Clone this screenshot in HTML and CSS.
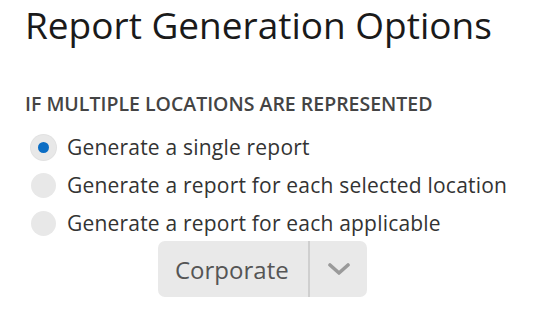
FILE: index.html
```html
<!DOCTYPE html>
<html lang="en">
<head>
    <meta charset="UTF-8">
    <title>Report Generation Options</title>
    <link rel="stylesheet" href="styles.css">
</head>
<body>
    <div class="panel">
        <h1 class="title">Report Generation Options</h1>

        <div class="section-label">If multiple locations are represented</div>

        <div class="options">
            <label class="option">
                <span class="radio checked"></span>
                <span class="option-text">Generate a single report</span>
            </label>
            <label class="option">
                <span class="radio"></span>
                <span class="option-text">Generate a report for each selected location</span>
            </label>
            <label class="option">
                <span class="radio"></span>
                <span class="option-text">Generate a report for each applicable</span>
            </label>
        </div>

        <div class="select-row">
            <div class="select">
                <span class="select-value">Corporate</span>
                <span class="select-toggle">
                    <svg width="22" height="12" viewBox="0 0 22 12">
                        <path d="M2 2 L11 10 L20 2" fill="none" stroke="#9a9a9a" stroke-width="3.6" stroke-linecap="round" stroke-linejoin="round"/>
                    </svg>
                </span>
            </div>
        </div>
    </div>
</body>
</html>
```

FILE: styles.css
```css
body {
    margin: 0;
    background: #fff;
    font-family: 'Open Sans', 'Liberation Sans', sans-serif;
    color: #222;
}

.panel {
    padding: 0 0 0 25px;
}

.title {
    margin: 0;
    font-size: 37px;
    font-weight: 400;
    line-height: 50px;
    color: #1a1a1a;
    white-space: nowrap;
}

.section-label {
    margin-top: 42px;
    font-size: 19.5px;
    font-weight: 600;
    text-transform: uppercase;
    color: #444;
    line-height: 24px;
}

.options {
    margin-top: 19px;
    display: flex;
    flex-direction: column;
    gap: 14px;
}

.option {
    display: flex;
    align-items: center;
    gap: 11px;
    padding-left: 6px;
    height: 24px;
}

.radio {
    width: 25px;
    height: 25px;
    border-radius: 50%;
    background: #e8e8e8;
    display: flex;
    align-items: center;
    justify-content: center;
    flex-shrink: 0;
}

.radio.checked {
    box-shadow: 0 0 0 1px #e2e2e2;
}

.radio.checked::after {
    content: "";
    width: 11px;
    height: 11px;
    border-radius: 50%;
    background: #0b6dc4;
}

.option-text {
    font-size: 21px;
    letter-spacing: 0.2px;
    color: #333;
    white-space: nowrap;
}

.select-row {
    margin-top: 6px;
    padding-left: 133px;
}

.select {
    display: inline-flex;
    align-items: stretch;
    height: 56px;
    background: #e9e9e9;
    border-radius: 7px;
}

.select-value {
    display: flex;
    align-items: center;
    padding: 0 18px 0 17px;
    font-size: 24px;
    color: #555;
    width: 115px;
    white-space: nowrap;
    border-right: 2px solid #cfcfcf;
}

.select-toggle {
    display: flex;
    align-items: center;
    justify-content: center;
    width: 57px;
}
```
